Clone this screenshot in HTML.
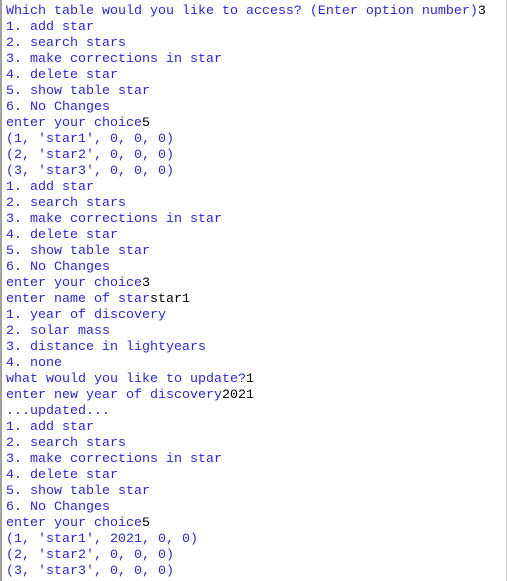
<!DOCTYPE html>
<html><head><style>
html,body{margin:0;padding:0;background:#fff;}
body{width:507px;height:581px;overflow:hidden;position:relative;box-sizing:border-box;border-left:2px solid #a0a0a0;border-right:1px solid #c8c8c8;}
pre{margin:0;position:absolute;left:4px;top:4px;font-family:"Liberation Mono",monospace;font-size:13.33px;line-height:16px;color:#2626f0;}
b{font-weight:normal;color:#000;}
</style></head><body><pre>Which table would you like to access? (Enter option number)<b>3</b>
1. add star
2. search stars
3. make corrections in star
4. delete star
5. show table star
6. No Changes
enter your choice<b>5</b>
(1, 'star1', 0, 0, 0)
(2, 'star2', 0, 0, 0)
(3, 'star3', 0, 0, 0)
1. add star
2. search stars
3. make corrections in star
4. delete star
5. show table star
6. No Changes
enter your choice<b>3</b>
enter name of star<b>star1</b>
1. year of discovery
2. solar mass
3. distance in lightyears
4. none
what would you like to update?<b>1</b>
enter new year of discovery<b>2021</b>
...updated...
1. add star
2. search stars
3. make corrections in star
4. delete star
5. show table star
6. No Changes
enter your choice<b>5</b>
(1, 'star1', 2021, 0, 0)
(2, 'star2', 0, 0, 0)
(3, 'star3', 0, 0, 0)</pre></body></html>
